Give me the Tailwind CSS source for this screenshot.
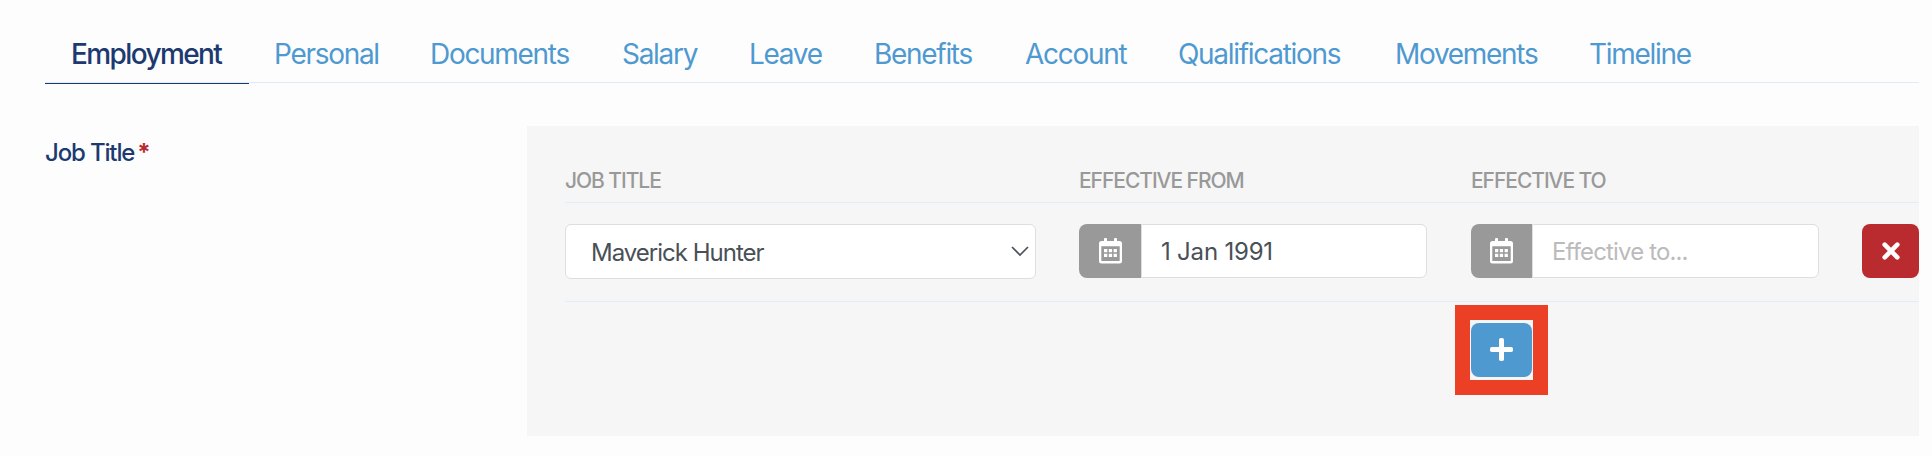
<!DOCTYPE html>
<html lang="en">
<head>
    <meta charset="UTF-8">
    <title>Employment</title>
    <script src="https://cdn.jsdelivr.net/npm/@tailwindcss/browser@4"></script>
</head>
<body class="bg-[#fdfdfd] font-['Inter',sans-serif] h-[456px] overflow-hidden pl-[45px] pr-[13px]">
    <nav class="grid grid-cols-[204px_156px_192px_127px_125px_151px_153px_217px_195px_auto] h-[83px] pt-[34px] border-b border-[#dcedfb] text-[28px] leading-10 tracking-[-1.3px] text-[#4f99d1] whitespace-nowrap">
        <a href="#" class="h-[50px] pl-[26px] border-b border-[#1c3a70] font-medium tracking-[-1.6px] text-[#1c3a70]">Employment</a>
        <a href="#" class="pl-[25px]">Personal</a>
        <a href="#" class="pl-[25px]">Documents</a>
        <a href="#" class="pl-[25px]">Salary</a>
        <a href="#" class="pl-[25px]">Leave</a>
        <a href="#" class="pl-[25px]">Benefits</a>
        <a href="#" class="pl-[25px]">Account</a>
        <a href="#" class="pl-[25px]">Qualifications</a>
        <a href="#" class="pl-[25px]">Movements</a>
        <a href="#" class="pl-6">Timeline</a>
    </nav>

    <div class="flex pt-[43px]">
        <label class="w-[482px] shrink-0 pt-[11px] text-2xl tracking-[-1.15px] font-medium text-[#1c3a70]">Job Title<span class="ml-[3px] font-bold text-[#b92b2f]">*</span></label>

        <div class="w-[1392px] h-[310px] pl-[38px] pt-10 bg-[#f6f6f6]">
            <div class="grid grid-cols-[514px_392px_391px_57px] h-[37px] border-b border-[#e0eefa] text-[21px] leading-[29px] tracking-[-1.05px] font-medium text-[#999]">
                <span>JOB TITLE</span>
                <span>EFFECTIVE FROM</span>
                <span>EFFECTIVE TO</span>
            </div>

            <div class="grid grid-cols-[514px_392px_391px_57px] h-[99px] pt-[21px] border-b border-[#e0eefa] text-2xl text-[#495057]">
                <button class="flex items-center justify-between w-[471px] h-[55px] pl-[25px] pr-[6px] rounded-md border border-[#dedede] bg-white">
                    <span class="pt-0.5 tracking-[-1px]">Maverick Hunter</span>
                    <svg class="w-[18px] h-[11px]" viewBox="0 0 18 11" fill="none" stroke="#495057" stroke-width="1.7"><path d="M1 1l8 8 8-8"/></svg>
                </button>

                <div class="flex w-[348px] h-[54px]">
                    <span class="flex items-center justify-center w-[62px] rounded-l-lg bg-[#999]">
                        <svg class="w-[23px] h-[26px]" viewBox="0 0 23 26" fill="#fff"><path fill-rule="evenodd" d="M6 0h1a1 1 0 0 1 1 1v2h7V1a1 1 0 0 1 1-1h1a1 1 0 0 1 1 1v2h2.500A2.500 2.500 0 0 1 23 5.500V23a2.500 2.500 0 0 1-2.500 2.500h-18A2.500 2.500 0 0 1 0 23V5.500A2.500 2.500 0 0 1 2.500 3H5V1a1 1 0 0 1 1-1zM2.300 8.200v14.300a.5.5 0 0 0 .5.5h17.400a.5.5 0 0 0 .5-.5V8.200z"/><path d="M5 11h3.300v3.300H5zM9.800 11h3.300v3.300H9.800zM14.600 11h3.300v3.300h-3.300zM5 15.700h3.300V19H5zM9.800 15.700h3.300V19H9.800zM14.600 15.700h3.300V19h-3.300z"/></svg>
                    </span>
                    <input type="text" value="1 Jan 1991" class="w-[286px] pl-[19px] pt-0.5 rounded-r-md border border-[#dedede] bg-white tracking-[-0.2px]">
                </div>

                <div class="flex w-[348px] h-[54px]">
                    <span class="flex items-center justify-center w-[61px] rounded-l-lg bg-[#999]">
                        <svg class="w-[23px] h-[26px]" viewBox="0 0 23 26" fill="#fff"><path fill-rule="evenodd" d="M6 0h1a1 1 0 0 1 1 1v2h7V1a1 1 0 0 1 1-1h1a1 1 0 0 1 1 1v2h2.500A2.500 2.500 0 0 1 23 5.500V23a2.500 2.500 0 0 1-2.500 2.500h-18A2.500 2.500 0 0 1 0 23V5.500A2.500 2.500 0 0 1 2.500 3H5V1a1 1 0 0 1 1-1zM2.300 8.200v14.300a.5.5 0 0 0 .5.5h17.400a.5.5 0 0 0 .5-.5V8.200z"/><path d="M5 11h3.300v3.300H5zM9.800 11h3.300v3.300H9.800zM14.600 11h3.300v3.300h-3.300zM5 15.700h3.300V19H5zM9.800 15.700h3.300V19H9.800zM14.600 15.700h3.300V19h-3.300z"/></svg>
                    </span>
                    <input type="text" placeholder="Effective to..." class="w-[287px] pl-[19px] pt-0.5 rounded-r-md border border-[#dedede] bg-white tracking-[-0.85px] placeholder:text-[#bbb]">
                </div>

                <button class="flex items-center justify-center w-[57px] h-[54px] rounded-lg bg-[#b92b2f]">
                    <svg class="w-[18px] h-[18px]" viewBox="0 0 18 18" stroke="#fff" stroke-width="4.600" stroke-linecap="round"><path d="M2.700 2.700l12.600 12.600M15.300 2.700L2.700 15.300"/></svg>
                </button>
            </div>

            <div class="pl-[890px] pt-[3px]">
                <div class="flex items-center justify-center w-[93px] h-[90px] border-[15px] border-[#eb4026]">
                    <button class="flex items-center justify-center w-[61px] h-[54px] pb-px rounded-lg bg-[#4f99d1]">
                        <svg class="w-[23px] h-[23px]" viewBox="0 0 23 23" fill="#fff"><rect x="9" width="5" height="23" rx="1.800"/><rect y="9" width="23" height="5" rx="1.800"/></svg>
                    </button>
                </div>
            </div>
        </div>
    </div>
</body>
</html>
